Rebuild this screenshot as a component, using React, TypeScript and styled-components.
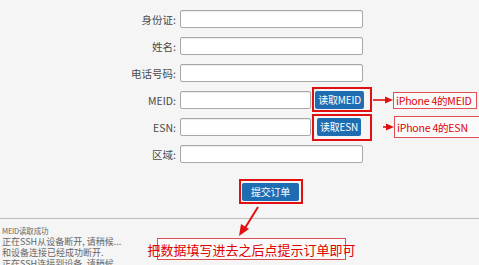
import styled, { createGlobalStyle } from "styled-components";

const GlobalStyle = createGlobalStyle`
  html, body {
    margin: 0;
    padding: 0;
    background: #f5f5f5;
  }
  body {
    font-family: "Noto Sans CJK SC", "Noto Sans", sans-serif;
  }
`;

const StyledPage = styled.div`
  position: relative;
  width: 479px;
  height: 265px;
  overflow: hidden;
  background: #f5f5f5;
`;

const StyledForm = styled.div`
  display: flex;
  flex-direction: column;
  gap: 9px;
  padding-top: 10px;
`;

const StyledRow = styled.div`
  display: flex;
  align-items: center;
  height: 18px;

  & > * {
    flex-shrink: 0;
  }
`;

const StyledLabel = styled.span`
  width: 176px;
  margin-right: 4px;
  text-align: right;
  font-size: 10.5px;
  color: #4a4a4a;
  white-space: nowrap;
`;

const StyledInput = styled.input<{ $short?: boolean }>`
  box-sizing: border-box;
  width: ${(p) => (p.$short ? "131px" : "183px")};
  height: 18px;
  margin: 0;
  padding: 0 3px;
  border: 1px solid #a8a8a8;
  border-radius: 2px;
  background: #fff;
  box-shadow: inset 0 1px 1px rgba(0, 0, 0, 0.08);
`;

const StyledMarked = styled.span<{ $l: number; $r: number; $t: number; $b: number }>`
  position: relative;
  display: inline-flex;
  margin-left: ${(p) => p.$l}px;

  &::after {
    content: "";
    position: absolute;
    left: -${(p) => p.$l - 1}px;
    right: -${(p) => p.$r}px;
    top: -${(p) => p.$t}px;
    bottom: -${(p) => p.$b}px;
    border: 2px solid #e01010;
    pointer-events: none;
  }
`;

const StyledButton = styled.button<{ $w: number }>`
  box-sizing: border-box;
  width: ${(p) => p.$w}px;
  height: 18px;
  padding: 0;
  border: none;
  border-radius: 2px;
  background: #1e6db2;
  color: #fff;
  font-family: "Noto Sans CJK SC", "Noto Sans", sans-serif;
  font-size: 10px;
  line-height: 18px;
  letter-spacing: -0.2px;
`;

const StyledCallout = styled.span<{ $gap: number }>`
  display: inline-flex;
  align-items: center;
  margin-left: ${(p) => p.$gap}px;
`;

const StyledNote = styled.span<{ $h: number; $w: number }>`
  box-sizing: border-box;
  display: inline-flex;
  align-items: center;
  height: ${(p) => p.$h}px;
  width: ${(p) => p.$w}px;
  padding-left: 2px;
  border: 1px solid #e05050;
  background: #fbfbfb;
  color: #e00000;
  font-size: 10.5px;
  letter-spacing: -0.2px;
  white-space: nowrap;
  overflow: hidden;
`;

const StyledSubmitRow = styled.div`
  display: flex;
  height: 16px;
  margin-top: 20px;
  padding-left: 238px;
`;

const StyledDivider = styled.hr`
  margin: 19px 0 0;
  border: none;
  border-top: 1px solid #bdbdbd;
`;

const StyledLog = styled.div`
  padding: 6px 0 0 2px;
  color: #666;
`;

const StyledLogLine = styled.div<{ $small?: boolean }>`
  height: 11px;
  line-height: 11px;
  white-space: nowrap;
  font-size: ${(p) => (p.$small ? "7.5px" : "9px")};
  letter-spacing: ${(p) => (p.$small ? "-0.2px" : "0")};
`;

const StyledBottomNote = styled.div`
  position: absolute;
  left: 157px;
  top: 238px;
  box-sizing: border-box;
  width: 189px;
  height: 22px;
  display: flex;
  align-items: center;
  justify-content: center;
  border: 1px solid #d85050;
  background: #fbfbfb;
  color: #e00000;
  font-size: 13px;
  white-space: nowrap;
`;

const StyledOverlay = styled.svg`
  position: absolute;
  left: 0;
  top: 0;
  pointer-events: none;
`;

const Arrow = ({ width }: { width: number }) => (
  <svg width={width} height="8" viewBox={`0 0 ${width} 8`}>
    <line x1="0" y1="4" x2={width - 6} y2="4" stroke="#e01010" strokeWidth="1.6" />
    <polygon points={`${width - 8},0.5 ${width},4 ${width - 8},7.5`} fill="#e01010" />
  </svg>
);

const fields = [
  { label: "身份证:" },
  { label: "姓名:" },
  { label: "电话号码:" },
];

export default function App() {
  return (
    <StyledPage>
      <GlobalStyle />
      <StyledForm>
        {fields.map((f) => (
          <StyledRow key={f.label}>
            <StyledLabel>{f.label}</StyledLabel>
            <StyledInput />
          </StyledRow>
        ))}
        <StyledRow>
          <StyledLabel>MEID:</StyledLabel>
          <StyledInput $short />
          <StyledMarked $l={4} $r={8} $t={4} $b={3}>
            <StyledButton $w={49}>读取MEID</StyledButton>
          </StyledMarked>
          <StyledCallout $gap={9}>
            <Arrow width={20} />
            <StyledNote $h={17} $w={84}>iPhone 4的MEID</StyledNote>
          </StyledCallout>
        </StyledRow>
        <StyledRow>
          <StyledLabel>ESN:</StyledLabel>
          <StyledInput $short />
          <StyledMarked $l={6} $r={11} $t={4} $b={5}>
            <StyledButton $w={44}>读取ESN</StyledButton>
          </StyledMarked>
          <StyledCallout $gap={22}>
            <Arrow width={11} />
            <StyledNote $h={22} $w={90}>iPhone 4的ESN</StyledNote>
          </StyledCallout>
        </StyledRow>
        <StyledRow>
          <StyledLabel>区域:</StyledLabel>
          <StyledInput />
        </StyledRow>
      </StyledForm>
      <StyledSubmitRow>
        <StyledMarked $l={4} $r={4} $t={4} $b={5}>
          <StyledButton $w={57}>提交订单</StyledButton>
        </StyledMarked>
      </StyledSubmitRow>
      <StyledDivider />
      <StyledLog>
        <StyledLogLine $small>MEID读取成功</StyledLogLine>
        <StyledLogLine>正在SSH从设备断开, 请稍候...</StyledLogLine>
        <StyledLogLine>和设备连接已经成功断开.</StyledLogLine>
        <StyledLogLine>正在SSH连接到设备, 请稍候...</StyledLogLine>
      </StyledLog>
      <StyledBottomNote>把数据填写进去之后点提示订单即可</StyledBottomNote>
      <StyledOverlay width="479" height="265">
        <line x1="258" y1="207" x2="245" y2="228" stroke="#e01010" strokeWidth="2" />
        <polygon points="239,236 241,224 249,229" fill="#e01010" />
      </StyledOverlay>
    </StyledPage>
  );
}
